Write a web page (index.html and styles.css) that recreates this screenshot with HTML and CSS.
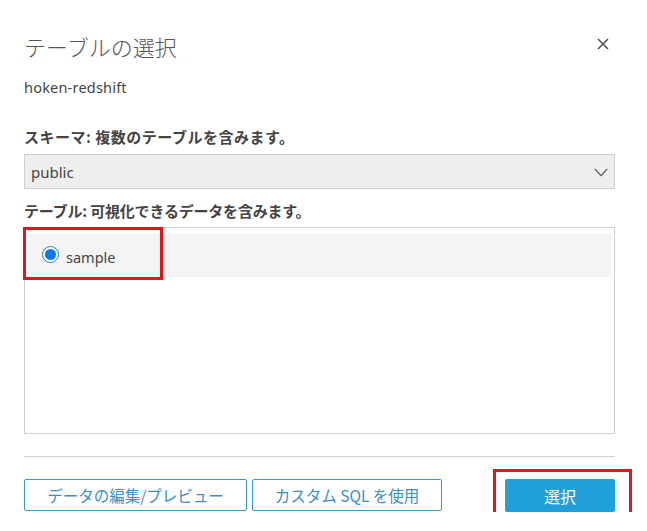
FILE: index.html
```html
<!DOCTYPE html>
<html lang="ja">
<head>
<meta charset="utf-8">
<title>テーブルの選択</title>
<link rel="stylesheet" href="styles.css">
</head>
<body>
<div class="dialog">
  <div class="header">
    <h1 class="title">テーブルの選択</h1>
    <button class="close" aria-label="閉じる">
      <svg width="12" height="12" viewBox="0 0 12 12"><path d="M1 1 L11 11 M11 1 L1 11" stroke="#555" stroke-width="1.6" fill="none"/></svg>
    </button>
  </div>
  <div class="subtitle">hoken-redshift</div>

  <div class="label schema-label">スキーマ: 複数のテーブルを含みます。</div>
  <div class="select">
    <span class="select-value">public</span>
    <svg class="chevron" width="14" height="9" viewBox="0 0 14 9"><path d="M0.8 0.8 L7 7.6 L13.2 0.8" stroke="#555" stroke-width="1.2" fill="none"/></svg>
  </div>

  <div class="label table-label">テーブル: 可視化できるデータを含みます。</div>
  <div class="list">
    <div class="row selected">
      <span class="radio"><span class="dot"></span></span>
      <span class="row-text">sample</span>
    </div>
    <div class="mark mark-row"></div>
  </div>

  <div class="divider"></div>

  <div class="footer">
    <div class="left-buttons">
      <button class="btn btn-outline btn-edit">データの編集/プレビュー</button>
      <button class="btn btn-outline btn-sql">カスタム SQL を使用</button>
    </div>
    <div class="primary-wrap">
      <button class="btn btn-primary">選択</button>
      <div class="mark mark-btn"></div>
    </div>
  </div>
</div>
</body>
</html>
```

FILE: styles.css
```css
html, body {
  margin: 0;
  padding: 0;
  background: #ffffff;
}

body {
  font-family: "Noto Sans", "Noto Sans CJK JP", sans-serif;
  color: #444;
}

.dialog {
  width: 591px;
  padding: 31px 0 0 24px;
}

.header {
  display: flex;
  justify-content: space-between;
  align-items: flex-start;
}

.title {
  margin: 0;
  font-family: "Noto Sans CJK JP", sans-serif;
  font-weight: 300;
  font-size: 22px;
  line-height: 30px;
  color: #555;
  letter-spacing: 0;
}

.close {
  border: 0;
  background: none;
  padding: 0;
  margin: 7px 6px 0 0;
  width: 12px;
  height: 12px;
  display: flex;
  cursor: pointer;
}

.subtitle {
  margin-top: 17px;
  font-size: 14.5px;
  line-height: 18px;
  letter-spacing: 0.2px;
  color: #444;
}

.label {
  font-family: "Noto Sans CJK JP", sans-serif;
  font-weight: 700;
  font-size: 15px;
  line-height: 20px;
  color: #444;
}

.schema-label {
  margin-top: 31px;
  letter-spacing: 0.5px;
}

.select {
  margin-top: 7px;
  height: 33px;
  border: 1px solid #cfcfcf;
  background: #eeeeee;
  display: flex;
  align-items: center;
  justify-content: space-between;
  padding: 0 6px 0 6px;
}

.select-value {
  font-size: 15px;
  color: #444;
}

.chevron {
  display: block;
  margin-top: 1px;
}

.table-label {
  margin-top: 12px;
  letter-spacing: -0.2px;
}

.list {
  position: relative;
  margin-top: 6px;
  height: 199px;
  border: 1px solid #cfcfcf;
  padding: 6px 3px 0 3px;
}

.row {
  height: 43px;
  display: flex;
  align-items: center;
  padding-left: 14px;
}

.row.selected {
  background: #f4f4f4;
}

.radio {
  width: 15px;
  height: 15px;
  border: 1px solid #1a7fe6;
  border-radius: 50%;
  background: #fff;
  display: flex;
  align-items: center;
  justify-content: center;
  margin-top: -3px;
}

.dot {
  width: 11px;
  height: 11px;
  border-radius: 50%;
  background: #0a78f0;
}

.row-text {
  margin-left: 7px;
  font-size: 14.5px;
  color: #444;
  margin-top: 3px;
}

.mark {
  position: absolute;
  border: 3px solid #e2141c;
  box-sizing: border-box;
  pointer-events: none;
}

.mark-row {
  left: -2px;
  top: -1px;
  width: 140px;
  height: 53px;
}

.divider {
  margin-top: 22px;
  height: 1px;
  background: #d4d4d4;
}

.footer {
  margin-top: 22px;
  display: flex;
  justify-content: space-between;
  align-items: flex-start;
}

.left-buttons {
  display: flex;
  gap: 5px;
}

.btn {
  font-family: "Noto Sans CJK JP", sans-serif;
  font-size: 15.5px;
  height: 32px;
  border-radius: 2px;
  box-sizing: border-box;
  padding: 0;
  cursor: pointer;
}

.btn-outline {
  background: #fff;
  border: 1px solid #3a98cc;
  color: #3b8fc2;
}

.btn-edit {
  width: 223px;
}

.btn-sql {
  width: 190px;
}

.primary-wrap {
  position: relative;
}

.btn-primary {
  width: 110px;
  height: 33px;
  border: 0;
  background: #219fd8;
  color: #ffffff;
  font-size: 16px;
}

.mark-btn {
  left: -12px;
  top: -10px;
  width: 139px;
  height: 52px;
}
```
